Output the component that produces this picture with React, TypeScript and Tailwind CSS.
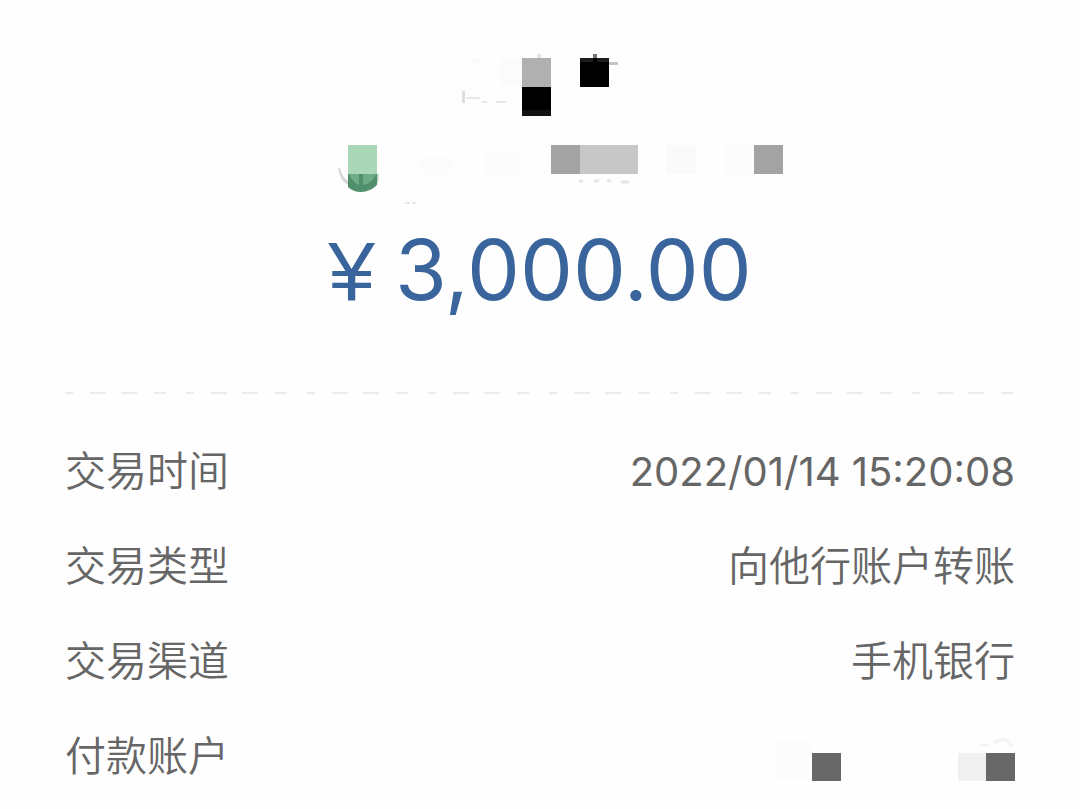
const rows = [
  { label: '交易时间', value: '2022/01/14 15:20:08', numeric: true },
  { label: '交易类型', value: '向他行账户转账', numeric: false },
  { label: '交易渠道', value: '手机银行', numeric: false },
]

function PayeeMosaic() {
  return (
    <svg className="h-20 w-50" viewBox="440 40 200 80" role="img" aria-label="收款人">
      <path d="M462 80h34v30h-34zM551 60h24v50h-24zM580 87h58v22h-58z" fill="#fdfdfd" />
      <path d="M470 59h10v4h-10zM500 58h22v28h-22z" fill="#fbfbfb" />
      <rect x="462" y="91" width="3" height="12" fill="#dedede" />
      <path d="M466 98h14M482 102h5M496 102h10" stroke="#e8e8e8" strokeWidth="2" />
      <rect x="537" y="54" width="4" height="4" fill="#e4e4e4" />
      <rect x="522" y="58" width="29" height="29" fill="#b0b0b0" />
      <rect x="522" y="87" width="29" height="29" fill="#000" />
      <path d="M522 110h29v6h-29z" fill="#121212" />
      <rect x="593" y="54" width="4" height="4" fill="#777" />
      <rect x="609" y="62" width="9" height="3" fill="#c5c5c5" />
      <rect x="580" y="58" width="29" height="29" fill="#000" />
      <path d="M580 58h13v4h-13zM597 58h12v4h-12z" fill="#1c1c1c" />
    </svg>
  )
}

function BankMosaic() {
  return (
    <svg className="h-18 w-125" viewBox="290 140 500 72" role="img" aria-label="收款银行">
      <path d="M338 168q2 13 10 17v-4q-6-4-8-13z" fill="#d5d8d6" />
      <rect x="348" y="145" width="29" height="29" fill="#a9d7b7" />
      <path d="M348 174h29v11q-7 7-16 7-8 0-13-5z" fill="#4f8f6c" />
      <path d="M349 174h10v11q-7-3-10-11zM363 174h13q-3 9-13 11z" fill="#70ab88" />
      <path d="M377 174h2q0 6-2 10z" fill="#bcd6c6" />
      <path d="M405 203h5M412 203h4" stroke="#d0d0d0" strokeWidth="1" />
      <path d="M418 156h36v18h-36zM486 152h34v24h-34z" fill="#fcfcfc" />
      <rect x="551" y="145" width="29" height="29" fill="#a3a3a3" />
      <rect x="580" y="145" width="58" height="29" fill="#c7c7c7" />
      <path d="M579 181h4M594 181h5M607 181h4M621 182h8" stroke="#e6e6e6" strokeWidth="3" />
      <rect x="666" y="145" width="30" height="29" fill="#fafafa" />
      <rect x="724" y="145" width="30" height="29" fill="#fcfcfc" />
      <rect x="754" y="145" width="29" height="29" fill="#a3a3a3" />
    </svg>
  )
}

function Divider() {
  return (
    <svg className="h-1 w-full" aria-hidden="true">
      <line x1="0" y1="1" x2="100%" y2="1" stroke="#ebebeb" strokeWidth="2" strokeDasharray="8 17 16 15 16 17 12 20" />
    </svg>
  )
}

function AccountMosaic() {
  return (
    <svg className="h-12 w-60" viewBox="775 734 240 48" role="img" aria-label="付款账户">
      <path d="M777 740h35v42h-35z" fill="#fcfcfc" />
      <rect x="812" y="754" width="29" height="28" fill="#686868" />
      <rect x="958" y="754" width="28" height="28" fill="#f0f0f0" />
      <path d="M980 746h9M994 744q5-4 12-3l6 6" stroke="#f3f3f3" strokeWidth="3" fill="none" />
      <rect x="986" y="754" width="29" height="28" fill="#686868" />
    </svg>
  )
}

export default function App() {
  return (
    <main className="min-h-screen bg-[#fefefe] px-[65px] pt-10 font-['Inter','Noto_Sans_CJK_SC',sans-serif] text-[#666666]">
      <header className="flex flex-col items-center">
        <h1>
          <PayeeMosaic />
        </h1>
        <div className="mt-5">
          <BankMosaic />
        </div>
        <p className="mt-4 flex items-baseline gap-5 text-[84px] leading-[84px] text-[#3a659c]">
          <span className="font-['Liberation_Sans',sans-serif]">¥</span>
          <span>3,000.00</span>
        </p>
      </header>
      <div className="mt-[79px] flex">
        <Divider />
      </div>
      <dl className="mt-7 text-[41px] leading-[95px]">
        {rows.map((row) => (
          <div key={row.label} className="flex justify-between">
            <dt className="font-[350]">{row.label}</dt>
            <dd className={row.numeric ? 'text-[40px]' : 'font-[350]'}>{row.value}</dd>
          </div>
        ))}
        <div className="flex items-center justify-between">
          <dt className="font-[350]">付款账户</dt>
          <dd>
            <AccountMosaic />
          </dd>
        </div>
      </dl>
    </main>
  )
}
